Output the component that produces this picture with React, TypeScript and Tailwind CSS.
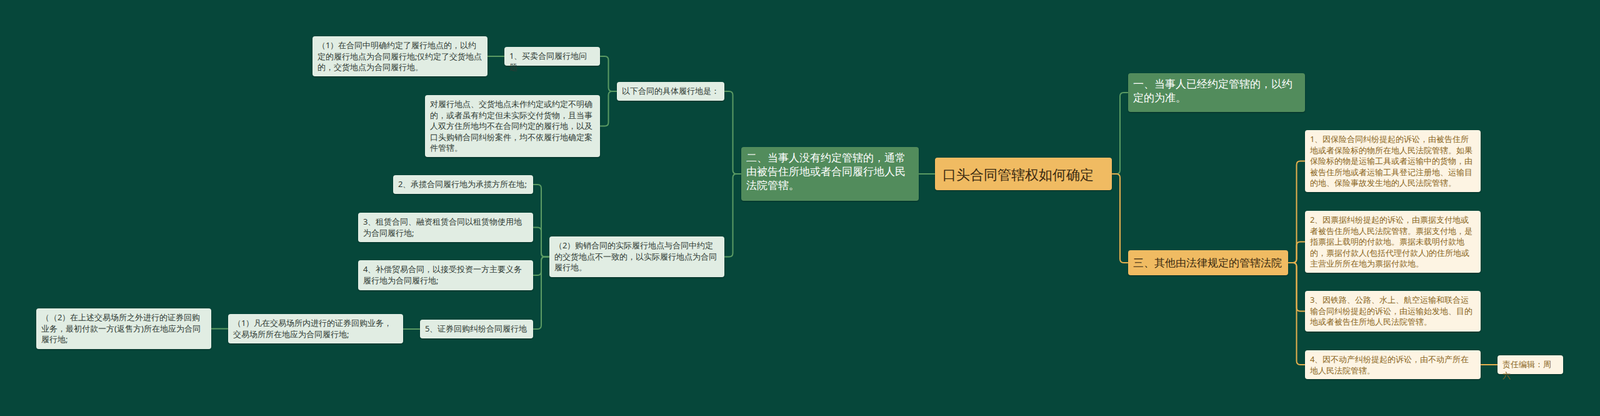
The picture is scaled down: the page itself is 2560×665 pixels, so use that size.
type N = {
  id: string;
  x: number;
  y: number;
  w: number;
  h: number;
  text: string;
  kind: "root" | "green" | "light" | "orange" | "cream";
};

// mind-map nodes sit on a free canvas, so their boxes come from this data
const nodes: N[] = [
  { id: "root", x: 1496, y: 252, w: 283, h: 52, text: "口头合同管辖权如何确定", kind: "root" },
  { id: "E", x: 1186, y: 235, w: 284, h: 86, text: "二、当事人没有约定管辖的，通常由被告住所地或者合同履行地人民法院管辖。", kind: "green" },
  { id: "C", x: 987, y: 131, w: 172, h: 30, text: "以下合同的具体履行地是：", kind: "light" },
  { id: "B", x: 807, y: 75, w: 153, h: 30, text: "1、买卖合同履行地问题", kind: "light" },
  { id: "A", x: 500, y: 58, w: 280, h: 64, text: "（1）在合同中明确约定了履行地点的，以约定的履行地点为合同履行地;仅约定了交货地点的，交货地点为合同履行地。", kind: "light" },
  { id: "D", x: 680, y: 152, w: 280, h: 99, text: "对履行地点、交货地点未作约定或约定不明确的，或者虽有约定但未实际交付货物，且当事人双方住所地均不在合同约定的履行地，以及口头购销合同纠纷案件，均不依履行地确定案件管辖。", kind: "light" },
  { id: "H", x: 879, y: 378, w: 280, h: 65, text: "（2）购销合同的实际履行地点与合同中约定的交货地点不一致的，以实际履行地点为合同履行地。", kind: "light" },
  { id: "F", x: 629, y: 280, w: 224, h: 30, text: "2、承揽合同履行地为承揽方所在地;", kind: "light" },
  { id: "G", x: 573, y: 340, w: 280, h: 47, text: "3、租赁合同、融资租赁合同以租赁物使用地为合同履行地;", kind: "light" },
  { id: "I", x: 573, y: 416, w: 280, h: 48, text: "4、补偿贸易合同，以接受投资一方主要义务履行地为合同履行地;", kind: "light" },
  { id: "J", x: 672, y: 511, w: 181, h: 30, text: "5、证券回购纠纷合同履行地", kind: "light" },
  { id: "K", x: 365, y: 502, w: 280, h: 47, text: "（1）凡在交易场所内进行的证券回购业务，交易场所所在地应为合同履行地;", kind: "light" },
  { id: "L", x: 58, y: 493, w: 280, h: 65, text: "（（2）在上述交易场所之外进行的证券回购业务，最初付款一方(返售方)所在地应为合同履行地;", kind: "light" },
  { id: "M", x: 1805, y: 117, w: 283, h: 62, text: "一、当事人已经约定管辖的，以约定的为准。", kind: "green" },
  { id: "N", x: 1805, y: 400, w: 256, h: 40, text: "三、其他由法律规定的管辖法院", kind: "orange" },
  { id: "O1", x: 2088, y: 208, w: 281, h: 99, text: "1、因保险合同纠纷提起的诉讼，由被告住所地或者保险标的物所在地人民法院管辖。如果保险标的物是运输工具或者运输中的货物，由被告住所地或者运输工具登记注册地、运输目的地、保险事故发生地的人民法院管辖。", kind: "cream" },
  { id: "O2", x: 2088, y: 337, w: 281, h: 99, text: "2、因票据纠纷提起的诉讼，由票据支付地或者被告住所地人民法院管辖。票据支付地，是指票据上载明的付款地。票据未载明付款地的，票据付款人(包括代理付款人)的住所地或主营业所所在地为票据付款地。", kind: "cream" },
  { id: "O3", x: 2088, y: 465, w: 281, h: 65, text: "3、因铁路、公路、水上、航空运输和联合运输合同纠纷提起的诉讼，由运输始发地、目的地或者被告住所地人民法院管辖。", kind: "cream" },
  { id: "O4", x: 2088, y: 560, w: 281, h: 46, text: "4、因不动产纠纷提起的诉讼，由不动产所在地人民法院管辖。", kind: "cream" },
  { id: "P", x: 2396, y: 568, w: 105, h: 30, text: "责任编辑：周六", kind: "cream" },
];

const edges: [string, string, string][] = [
  ["root", "E", "#5a9a63"],
  ["E", "C", "#5a9a63"],
  ["C", "B", "#5a9a63"],
  ["B", "A", "#5a9a63"],
  ["C", "D", "#5a9a63"],
  ["E", "H", "#5a9a63"],
  ["H", "F", "#5a9a63"],
  ["H", "G", "#5a9a63"],
  ["H", "I", "#5a9a63"],
  ["H", "J", "#5a9a63"],
  ["J", "K", "#5a9a63"],
  ["K", "L", "#5a9a63"],
  ["root", "M", "#5a9a63"],
  ["root", "N", "#e5b04e"],
  ["N", "O1", "#e5b04e"],
  ["N", "O2", "#e5b04e"],
  ["N", "O3", "#e5b04e"],
  ["N", "O4", "#e5b04e"],
  ["O4", "P", "#e5b04e"],
];

const byId = Object.fromEntries(nodes.map((n) => [n.id, n]));

function edgePath(p: N, c: N) {
  const right = c.x > p.x;
  const x0 = right ? p.x + p.w : p.x;
  const x1 = right ? c.x : c.x + c.w;
  const y0 = p.y + p.h / 2;
  const y1 = c.y + c.h / 2;
  const mx = (x0 + x1) / 2;
  const dy = y1 - y0;
  const r = Math.min(6, Math.abs(dy) / 2);
  const s = Math.sign(dy);
  const d = right ? 1 : -1;
  if (r < 1) return `M${x0},${y0} H${x1}`;
  return `M${x0},${y0} H${mx - d * r} Q${mx},${y0} ${mx},${y0 + s * r} V${y1 - s * r} Q${mx},${y1} ${mx + d * r},${y1} H${x1}`;
}

const styles: Record<N["kind"], string> = {
  root: "bg-[#f0bb62] text-[#3a2a10] text-[22px] leading-[28px] px-3 items-center",
  green: "bg-[#528c5c] text-white text-[17px] leading-[22px] px-2 py-1.5",
  light: "bg-[#e1ede3] text-[#2f3a33] text-[13px] leading-[17.5px] px-2 py-1.5",
  orange: "bg-[#f0bb62] text-[#3a2a10] text-[16.5px] leading-[22px] px-2 items-center",
  cream: "bg-[#fdf4e3] text-[#8a6520] text-[13px] leading-[17.5px] px-2 py-1.5",
};

export default function App() {
  return (
    <div className="relative w-[2560px] h-[665px] overflow-hidden bg-[#06473a] font-['Noto_Sans_CJK_SC','Liberation_Sans',sans-serif]">
      <svg className="absolute inset-0" width={2560} height={665}>
        {edges.map(([a, b, col]) => (
          <path key={a + b} d={edgePath(byId[a], byId[b])} stroke={col} strokeWidth={2} fill="none" />
        ))}
      </svg>
      {nodes.map((n) => (
        <div
          key={n.id}
          className={`absolute flex rounded-[4px] shadow-[0_1px_2px_rgba(0,0,0,0.35)] break-all ${styles[n.kind]}`}
          style={{ left: n.x, top: n.y, width: n.w, height: n.h }}
        >
          <span>{n.text}</span>
        </div>
      ))}
    </div>
  );
}
